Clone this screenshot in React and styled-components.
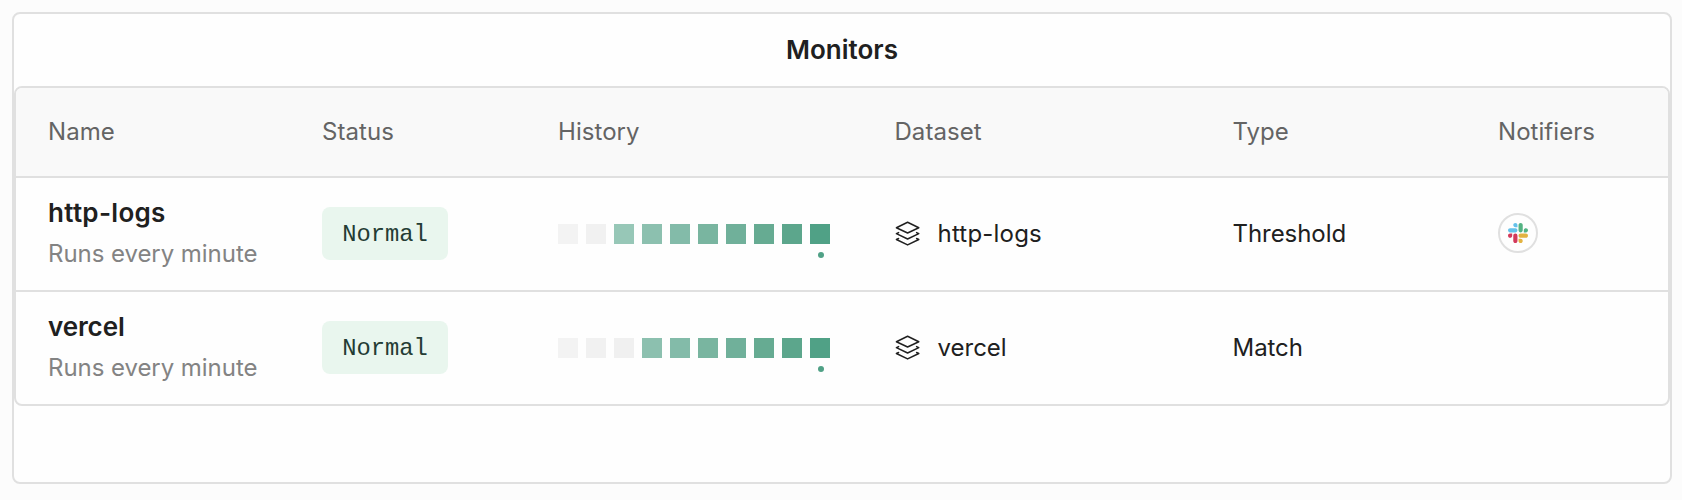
import React from "react";
import styled, { createGlobalStyle } from "styled-components";

const GlobalStyle = createGlobalStyle`
  *, *::before, *::after { box-sizing: border-box; }
  body {
    margin: 0;
    background: #fcfcfc;
    color: #202020;
    font-family: Inter, "Liberation Sans", sans-serif;
    font-size: 24px;
    line-height: 40px;
  }
`;

const Page = styled.main`
  height: 500px;
  padding: 12px 10px 16px 12px;
`;

const Card = styled.section`
  height: 100%;
  background: #fefefe;
  border: 2px solid #e0e0e0;
  border-radius: 8px;
`;

const Title = styled.h1`
  margin: 0;
  height: 72px;
  line-height: 72px;
  font-size: 26px;
  font-weight: 600;
  text-align: center;
`;

const Table = styled.div`
  border: 2px solid #e0e0e0;
  border-radius: 8px;
  overflow: hidden;
`;

const Row = styled.div`
  display: grid;
  grid-template-columns: 274px 236px 336.5px 338px 265.5px 1fr;
  align-items: center;
  height: 112px;
  padding-left: 32px;

  & + & {
    height: 114px;
    border-top: 2px solid #e0e0e0;
  }
`;

const HeaderRow = styled(Row)`
  height: 88px;
  background: #f9f9f9;
  color: #646464;
`;

const Body = styled.div`
  border-top: 2px solid #e0e0e0;
`;

const Text = styled.span`
  letter-spacing: ${(p) => p.$spacing || "0"};
  white-space: nowrap;
`;

const NameCell = styled.div`
  display: flex;
  flex-direction: column;
  padding-bottom: 2px;
`;

const Name = styled(Text)`
  font-size: 26px;
  font-weight: 600;
  height: 41px;
`;

const Schedule = styled.span`
  color: #838383;
  letter-spacing: -0.05px;
  white-space: nowrap;
`;

const Badge = styled.span`
  justify-self: start;
  width: 126px;
  height: 53px;
  margin-bottom: 1px;
  border-radius: 8px;
  background: #e9f6ee;
  color: #243c34;
  font-family: "Liberation Mono", monospace;
  font-size: 23.8px;
  line-height: 56px;
  text-align: center;
`;

const HistoryBar = styled.div`
  display: flex;
  gap: 8px;
`;

const Tick = styled.i`
  position: relative;
  width: 20px;
  height: 20px;
  background: ${(p) => p.$color};

  &:last-child::after {
    content: "";
    position: absolute;
    left: 8px;
    top: 28px;
    width: 6px;
    height: 6px;
    border-radius: 50%;
    background: #50a186;
  }
`;

const DatasetCell = styled.div`
  display: flex;
  align-items: center;
  gap: 18px;
`;

const Notifier = styled.span`
  display: grid;
  place-items: center;
  width: 40px;
  height: 40px;
  margin-bottom: 2px;
  border: 2px solid #e0e0e0;
  border-radius: 50%;
`;

const LayersIcon = () => (
  <svg width="25" height="26" viewBox="0 0 25 26" fill="none" stroke="#202020" strokeWidth="1.5" strokeLinejoin="round" strokeLinecap="round">
    <path d="M12.6 1.3 L23.8 6.7 L12.6 12 L1.4 6.7Z" />
    <path d="M3.6 11.6 L1.4 12.6 L12.6 18 L23.8 12.6 L21.6 11.6" />
    <path d="M3.6 17.5 L1.4 18.5 L12.6 23.9 L23.8 18.5 L21.6 17.5" />
  </svg>
);

const SlackIcon = () => (
  <svg width="20" height="20" viewBox="0 0 122.8 122.8">
    <path fill="#d33a5c" d="M25.8 77.6c0 7.1-5.8 12.9-12.9 12.9S0 84.7 0 77.6s5.8-12.9 12.9-12.9h12.9v12.9zm6.5 0c0-7.1 5.8-12.9 12.9-12.9s12.9 5.8 12.9 12.9v32.3c0 7.1-5.8 12.9-12.9 12.9s-12.9-5.8-12.9-12.9V77.6z" />
    <path fill="#64c1ea" d="M45.2 25.8c-7.1 0-12.9-5.8-12.9-12.9S38.1 0 45.2 0s12.9 5.8 12.9 12.9v12.9H45.2zm0 6.5c7.1 0 12.9 5.8 12.9 12.9s-5.8 12.9-12.9 12.9H12.9C5.8 58.1 0 52.3 0 45.2s5.8-12.9 12.9-12.9h32.3z" />
    <path fill="#54b383" d="M97 45.2c0-7.1 5.8-12.9 12.9-12.9s12.9 5.8 12.9 12.9-5.8 12.9-12.9 12.9H97V45.2zm-6.5 0c0 7.1-5.8 12.9-12.9 12.9s-12.9-5.8-12.9-12.9V12.9C64.7 5.8 70.5 0 77.6 0s12.9 5.8 12.9 12.9v32.3z" />
    <path fill="#e3b341" d="M77.6 97c7.1 0 12.9 5.8 12.9 12.9s-5.8 12.9-12.9 12.9-12.9-5.8-12.9-12.9V97h12.9zm0-6.5c-7.1 0-12.9-5.8-12.9-12.9s5.8-12.9 12.9-12.9h32.3c7.1 0 12.9 5.8 12.9 12.9s-5.8 12.9-12.9 12.9H77.6z" />
  </svg>
);

const COLUMNS = ["Name", "Status", "History", "Dataset", "Type", "Notifiers"];

const GREENS = ["#97c7b7", "#8cc0af", "#83bba9", "#79b5a0", "#70b09a", "#66ab92", "#5ca68c", "#50a186"];
const IDLE = ["#f3f3f3", "#f1f1f1", "#f0f0f0"];

const MONITORS = [
  { name: "http-logs", type: "Threshold", idle: 2, slack: true, nameSpacing: "0.3px", datasetSpacing: "0.2px" },
  { name: "vercel", type: "Match", idle: 3, slack: false, nameSpacing: "-0.1px" },
];

const ticks = (idle) => [...IDLE.slice(0, idle), ...GREENS.slice(idle - 2)];

export default function App() {
  return (
    <Page>
      <GlobalStyle />
      <Card>
        <Title>Monitors</Title>
        <Table>
          <HeaderRow>
            {COLUMNS.map((label) => (
              <Text key={label} $spacing="0.05px">{label}</Text>
            ))}
          </HeaderRow>
          <Body>
            {MONITORS.map((m) => (
              <Row key={m.name}>
                <NameCell>
                  <Name $spacing={m.nameSpacing}>{m.name}</Name>
                  <Schedule>Runs every minute</Schedule>
                </NameCell>
                <Badge>Normal</Badge>
                <HistoryBar>
                  {ticks(m.idle).map((color, i) => (
                    <Tick key={i} $color={color} />
                  ))}
                </HistoryBar>
                <DatasetCell>
                  <LayersIcon />
                  <Text $spacing={m.datasetSpacing}>{m.name}</Text>
                </DatasetCell>
                <Text $spacing="-0.05px">{m.type}</Text>
                {m.slack && (
                  <Notifier>
                    <SlackIcon />
                  </Notifier>
                )}
              </Row>
            ))}
          </Body>
        </Table>
      </Card>
    </Page>
  );
}
